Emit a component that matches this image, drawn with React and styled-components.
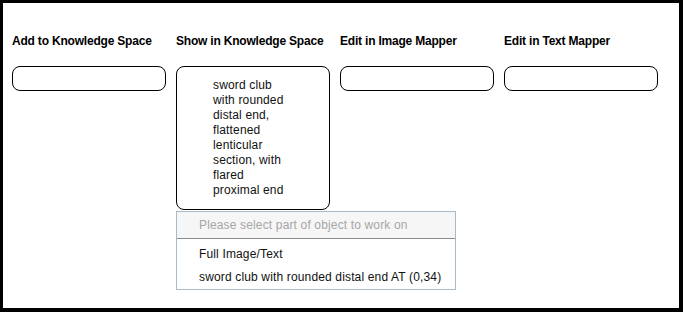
import React from "react";
import styled, { createGlobalStyle } from "styled-components";

const Global = createGlobalStyle`
  body {
    margin: 0;
    background: #fff;
    font-family: "Liberation Sans", Arial, sans-serif;
  }
`;

const Frame = styled.div`
  box-sizing: border-box;
  width: 683px;
  height: 312px;
  border-style: solid;
  border-color: #000;
  border-width: 3px 4px 4px 3px;
  background: #fff;
  padding: 31px 0 0 9px;
`;

const Columns = styled.div`
  display: grid;
  grid-template-columns: repeat(4, 154px);
  column-gap: 10px;
  align-items: start;
`;

const Column = styled.div`
  display: flex;
  flex-direction: column;
  position: relative;
`;

const Heading = styled.div`
  font-size: 12px;
  line-height: 14px;
  font-weight: bold;
  letter-spacing: -0.2px;
  color: #000;
  white-space: nowrap;
  margin-bottom: 18px;
`;

const Box = styled.div`
  box-sizing: border-box;
  width: 154px;
  min-height: 25px;
  border: 1px solid #000;
  border-radius: 8px;
  background: #fff;
  padding: ${(p) => (p.$filled ? "11px 0" : "0")};
`;

const BoxText = styled.div`
  width: 80px;
  margin: 0 auto;
  font-size: 12px;
  line-height: 15px;
  letter-spacing: 0.15px;
  color: #111;
`;

const Menu = styled.div`
  position: absolute;
  top: 100%;
  left: 0;
  margin-top: 1px;
  box-sizing: border-box;
  width: 280px;
  border: 1px solid #a9bac8;
  background: #fff;
  font-size: 12px;
  letter-spacing: 0.15px;
`;

const Prompt = styled.div`
  height: 26px;
  line-height: 26px;
  padding-left: 22px;
  background: #f6f6f6;
  color: #a6a6a6;
  border-bottom: 1px solid #8c8c8c;
  white-space: nowrap;
`;

const Options = styled.div`
  padding: 4px 0 0;
`;

const Option = styled.div`
  height: 23px;
  line-height: 23px;
  padding-left: 22px;
  color: #111;
  white-space: nowrap;
`;

export default function App() {
  return (
    <>
      <Global />
      <Frame>
        <Columns>
          <Column>
            <Heading>Add to Knowledge Space</Heading>
            <Box />
          </Column>
          <Column>
            <Heading>Show in Knowledge Space</Heading>
            <Box $filled>
              <BoxText>
                sword club with rounded distal end, flattened lenticular
                section, with flared proximal end
              </BoxText>
            </Box>
            <Menu>
              <Prompt>Please select part of object to work on</Prompt>
              <Options>
                <Option>Full Image/Text</Option>
                <Option>sword club with rounded distal end AT (0,34)</Option>
              </Options>
            </Menu>
          </Column>
          <Column>
            <Heading>Edit in Image Mapper</Heading>
            <Box />
          </Column>
          <Column>
            <Heading>Edit in Text Mapper</Heading>
            <Box />
          </Column>
        </Columns>
      </Frame>
    </>
  );
}
